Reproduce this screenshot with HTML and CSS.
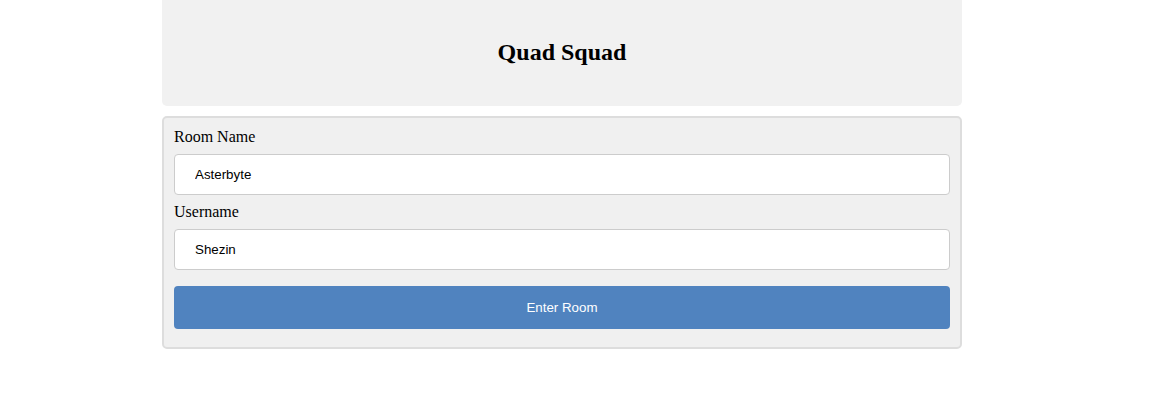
FILE: index.html
```html
<!DOCTYPE html>
<html>
<head>
<meta charset="utf-8">
<link rel="stylesheet" href="styles.css">
</head>
<body>
<div class="page">
  <header class="banner">
    <h2 class="title">Quad Squad</h2>
  </header>
  <form class="join">
    <label class="field-label" for="room">Room Name</label>
    <input class="field" id="room" type="text" value="Asterbyte">
    <label class="field-label" for="user">Username</label>
    <input class="field" id="user" type="text" value="Shezin">
    <button class="enter" type="button">Enter Room</button>
  </form>
</div>
</body>
</html>
```

FILE: styles.css
```css
html, body {
  margin: 0;
  padding: 0;
  background: #ffffff;
}
body {
  padding-right: 32px;
  font-family: "Liberation Serif", "Times New Roman", serif;
  color: #000;
}
.page {
  width: 800px;
  margin: 0 auto;
}
.banner {
  box-sizing: border-box;
  height: 106px;
  padding-bottom: 2px;
  background: #f1f1f1;
  border-radius: 0 0 5px 5px;
  display: flex;
  align-items: center;
  justify-content: center;
}
.title {
  margin: 0;
  font-size: 24px;
  font-weight: bold;
}
.join {
  margin-top: 10px;
  background: #f0f0f0;
  border: 2px solid #dddddd;
  border-radius: 5px;
  padding: 10px 10px 18px;
  display: flex;
  flex-direction: column;
}
.field-label {
  font-size: 16px;
  line-height: 18px;
  margin-bottom: 8px;
}
.field {
  box-sizing: border-box;
  height: 41px;
  border: 1px solid #cccccc;
  border-radius: 4px;
  background: #fff;
  padding: 0 20px;
  font-family: "Liberation Sans", Arial, sans-serif;
  font-size: 13.333px;
  color: #000;
  margin: 0 0 8px;
  outline: none;
}
.enter {
  margin-top: 8px;
  height: 43px;
  border: none;
  border-radius: 4px;
  background: #5083bf;
  color: #ffffff;
  font-family: "Liberation Sans", Arial, sans-serif;
  font-size: 13.333px;
}
```
